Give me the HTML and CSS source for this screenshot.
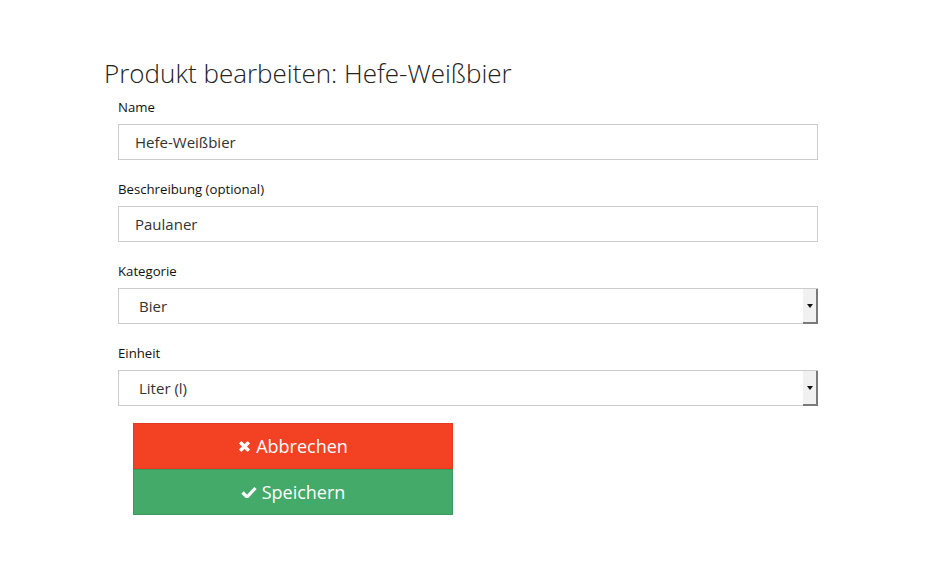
FILE: index.html
```html
<!DOCTYPE html>
<html lang="de">
<head>
<meta charset="utf-8">
<title>Produkt bearbeiten</title>
<link rel="stylesheet" href="styles.css">
</head>
<body>
<div class="page">
  <h1 class="title">Produkt bearbeiten: Hefe-Weißbier</h1>
  <form class="form">
    <div class="group">
      <label class="label">Name</label>
      <input class="field" type="text" value="Hefe-Weißbier">
    </div>
    <div class="group">
      <label class="label">Beschreibung (optional)</label>
      <input class="field" type="text" value="Paulaner">
    </div>
    <div class="group">
      <label class="label">Kategorie</label>
      <div class="select-wrap">
        <select class="field select"><option>Bier</option></select>
        <span class="arrow"><span class="tri"></span></span>
      </div>
    </div>
    <div class="group">
      <label class="label">Einheit</label>
      <div class="select-wrap">
        <select class="field select"><option>Liter (l)</option></select>
        <span class="arrow"><span class="tri"></span></span>
      </div>
    </div>
    <div class="buttons">
      <button type="button" class="btn btn-cancel">
        <svg class="icon" viewBox="0 0 12 12" width="13" height="13"><path d="M2 2 L10 10 M10 2 L2 10" stroke="#fff" stroke-width="3.2" stroke-linecap="butt" fill="none"/></svg>
        Abbrechen
      </button>
      <button type="button" class="btn btn-save">
        <svg class="icon" viewBox="0 0 16 12" width="16" height="12"><path d="M1.5 6.5 L6 11 L14.5 2" stroke="#fff" stroke-width="3.2" fill="none"/></svg>
        Speichern
      </button>
    </div>
  </form>
</div>
</body>
</html>
```
FILE: styles.css
```css
html, body {
  margin: 0;
  padding: 0;
  background: #fff;
}
body {
  font-family: "Open Sans", "Liberation Sans", sans-serif;
  color: #333;
}
.page {
  padding: 54px 0 0 104px;
  width: 714px;
}
.title {
  margin: 0;
  font-size: 26px;
  font-weight: 300;
  line-height: 38px;
  color: #222;
}
.form {
  padding-left: 14px;
  padding-top: 6px;
}
.group {
  display: flex;
  flex-direction: column;
  margin-bottom: 20px;
}
.label {
  font-size: 13.2px;
  line-height: 18px;
  margin-bottom: 8px;
  color: #111;
}
.field {
  box-sizing: border-box;
  width: 700px;
  height: 36px;
  border: 1px solid #ccc;
  padding: 0 16px;
  font-family: "Open Sans", "Liberation Sans", sans-serif;
  font-size: 15px;
  color: #333;
  background: #fff;
  outline: none;
  margin: 0;
  border-radius: 0;
}
.select-wrap {
  position: relative;
  width: 700px;
}
.select {
  appearance: none;
  -webkit-appearance: none;
  padding-left: 20px;
}
.arrow {
  position: absolute;
  top: 1px;
  right: 0;
  width: 13px;
  height: 33px;
  background: #f1f1f1;
  border-right: 2px solid #7a7a7a;
  border-bottom: 2px solid #7a7a7a;
  display: flex;
  align-items: center;
  justify-content: center;
}
.tri {
  width: 0;
  height: 0;
  border-left: 3px solid transparent;
  border-right: 3px solid transparent;
  border-top: 4px solid #111;
}
.buttons {
  display: flex;
  flex-direction: column;
  margin-left: 15px;
  margin-top: -3px;
  width: 320px;
}
.btn {
  box-sizing: border-box;
  width: 320px;
  height: 46px;
  border: 1px solid transparent;
  font-family: "Open Sans", "Liberation Sans", sans-serif;
  font-size: 18px;
  color: #fff;
  display: flex;
  align-items: center;
  justify-content: center;
  gap: 5px;
  padding: 0;
  margin: 0;
  cursor: pointer;
}
.btn-cancel {
  background: #f34124;
  border-color: #e43a1f;
}
.btn-save {
  background: #43aa6a;
  border-color: #3b9a5e;
}
.icon {
  display: block;
}
```
